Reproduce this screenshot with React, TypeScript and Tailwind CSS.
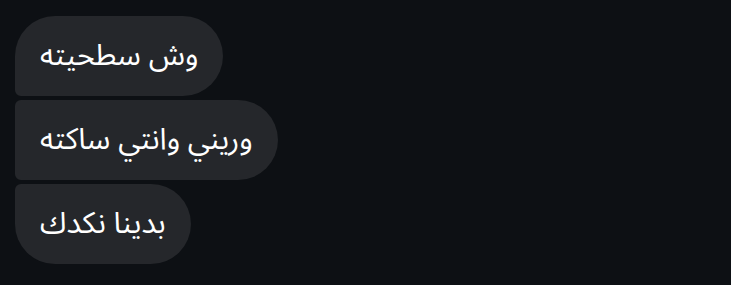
const messages = [
  { text: 'وش سطحيته', corners: 'rounded-[40px] rounded-bl-[6px]' },
  { text: 'وريني وانتي ساكته', corners: 'rounded-r-[40px] rounded-l-[6px]' },
  { text: 'بدينا نكدك', corners: 'rounded-[40px] rounded-tl-[6px]' },
]

const App = () => {
  return (
    <div className="min-h-screen bg-[#0d1014] px-[15px] pt-[16px]">
      <div className="flex flex-col items-start gap-[4px]">
        {messages.map((message) => (
          <div
            key={message.text}
            dir="rtl"
            className={`flex h-[80px] items-center bg-[#25272b] px-[25px] text-[30px] leading-none text-white ${message.corners}`}
            style={{ fontFamily: '"Noto Sans Arabic", "DejaVu Sans", sans-serif' }}
          >
            {message.text}
          </div>
        ))}
      </div>
    </div>
  )
}

export default App
